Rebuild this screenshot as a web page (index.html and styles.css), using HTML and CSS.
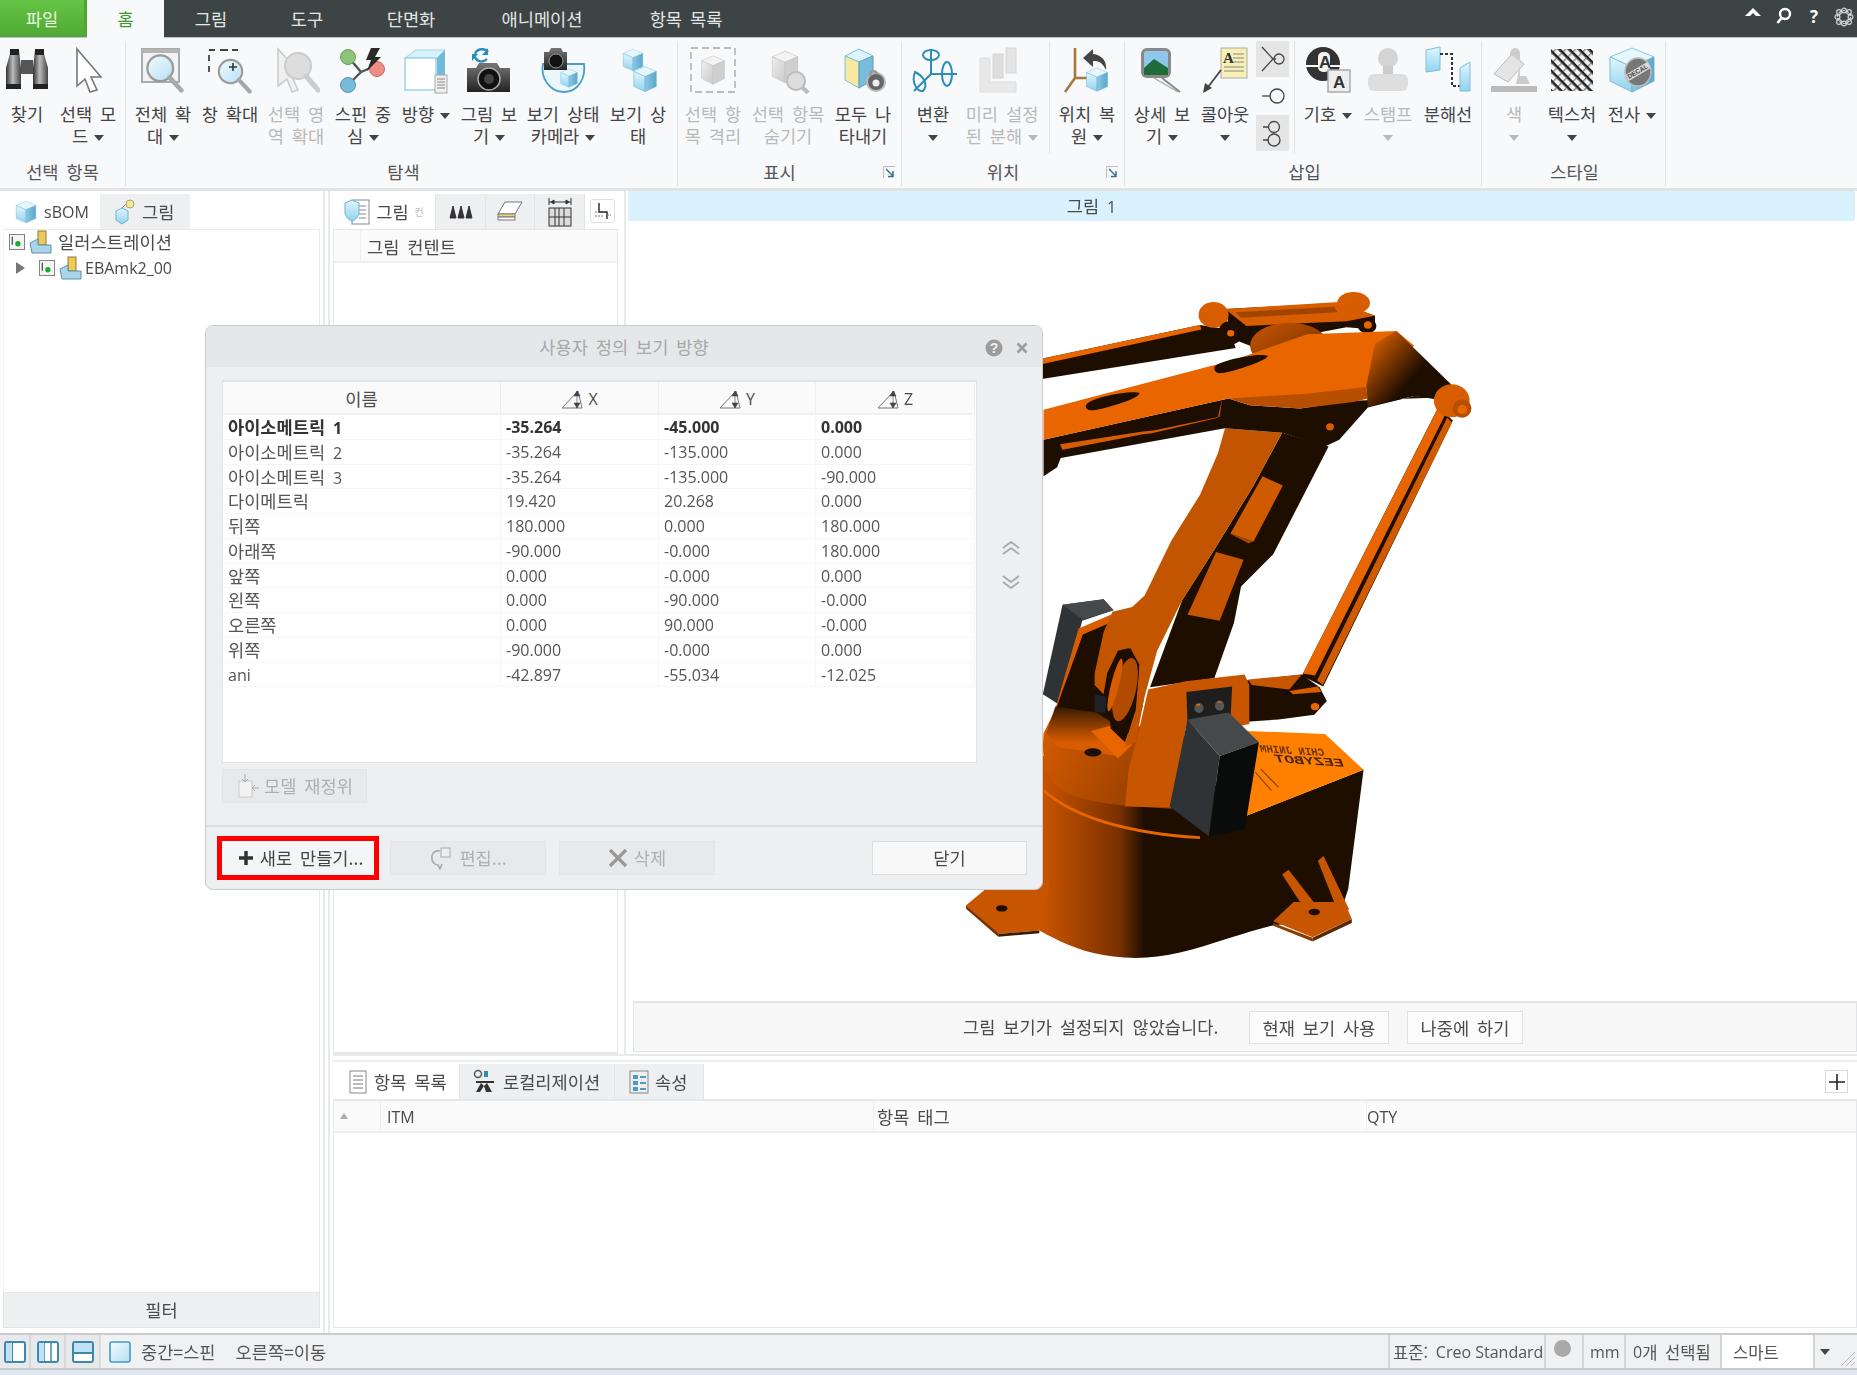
FILE: index.html
```html
<!DOCTYPE html>
<html lang="ko">
<head>
<meta charset="utf-8">
<title>Creo Illustrate</title>
<link rel="stylesheet" href="styles.css">
</head>
<body>
<svg class="sprite" width="0" height="0">
  <defs>
    <linearGradient id="gGray" x1="0" x2="1" y1="0" y2="0"><stop offset="0" stop-color="#333"/><stop offset=".45" stop-color="#bbb"/><stop offset="1" stop-color="#444"/></linearGradient>
    <linearGradient id="gBlue" x1="0" x2="0" y1="0" y2="1"><stop offset="0" stop-color="#e2f6fd"/><stop offset="1" stop-color="#8fd3ee"/></linearGradient>
    <linearGradient id="gSide" x1="0" x2="1" y1="0" y2="0"><stop offset="0" stop-color="#8cc9e4"/><stop offset="1" stop-color="#5aa6cc"/></linearGradient>
    <linearGradient id="gLens" x1="0" x2="1" y1="0" y2="1"><stop offset="0" stop-color="#f2fbff"/><stop offset="1" stop-color="#b5e0f4"/></linearGradient>
    <linearGradient id="gCam" x1="0" x2="0" y1="0" y2="1"><stop offset="0" stop-color="#777"/><stop offset="1" stop-color="#222"/></linearGradient>
    <linearGradient id="gPale" x1="0" x2="1" y1="0" y2="1"><stop offset="0" stop-color="#eee"/><stop offset="1" stop-color="#c9c9c9"/></linearGradient>
    <linearGradient id="gBase" gradientUnits="userSpaceOnUse" x1="260" x2="545" y1="0" y2="0"><stop offset="0" stop-color="#c85400"/><stop offset=".75" stop-color="#7a3000"/><stop offset="1" stop-color="#1e0e00"/></linearGradient>
    <linearGradient id="gPlate" gradientUnits="userSpaceOnUse" x1="270" x2="600" y1="960" y2="1170"><stop offset="0" stop-color="#d85c00"/><stop offset="1" stop-color="#8a3a00"/></linearGradient>
    <linearGradient id="gShade" gradientUnits="userSpaceOnUse" x1="0" x2="0" y1="940" y2="1030"><stop offset="0" stop-color="#1e0e00"/><stop offset="1" stop-color="#d85c00"/></linearGradient>
    <linearGradient id="gBand" gradientUnits="userSpaceOnUse" x1="1190" x2="1290" y1="130" y2="240"><stop offset="0" stop-color="#e86500"/><stop offset="1" stop-color="#1e0e00"/></linearGradient>
    <linearGradient id="gDome" x1="0" x2="1" y1="0" y2="1"><stop offset="0" stop-color="#c85500"/><stop offset="1" stop-color="#6a2c00"/></linearGradient>
    <symbol id="cube" viewBox="0 0 48 48">
      <path d="M6 12 24 4l18 8-18 8z" fill="#e6f7fd" stroke="#8ccbe6"/>
      <path d="M6 12l18 8v24L6 36z" fill="url(#gBlue)" stroke="#7dbedc"/>
      <path d="M42 12 24 20v24l18-8z" fill="url(#gSide)" stroke="#6fb2d2"/>
    </symbol>
    <symbol id="pcube" viewBox="0 0 48 48">
      <path d="M8 11 24 4l16 7-16 7z" fill="#f3f3f3" stroke="#ccc"/>
      <path d="M8 11l16 7v26L8 36z" fill="url(#gPale)" stroke="#ccc"/>
      <path d="M40 11 24 18v26l16-8z" fill="#cfcfcf" stroke="#c4c4c4"/>
    </symbol>
    <symbol id="lens" viewBox="0 0 48 48">
      <circle cx="21" cy="21" r="14" fill="url(#gLens)" stroke="#9a9a9a" stroke-width="2.5"/>
      <path d="M31 31 44 45" stroke="#a8a8a8" stroke-width="5" stroke-linecap="round"/>
    </symbol>
    <symbol id="part" viewBox="0 0 24 24">
      <rect x="9" y="1" width="8" height="14" fill="#f0c95a" stroke="#8d7a3a"/>
      <path d="M1 13 9 9v6h13v8H3z" fill="#a9d4ea" stroke="#5d8fa8"/>
    </symbol>
    <symbol id="chk" viewBox="0 0 18 18">
      <rect x=".5" y=".5" width="17" height="17" fill="#f4f4f4" stroke="#777"/>
      <rect x="3" y="3" width="1.5" height="9" fill="#555"/>
      <circle cx="10" cy="11" r="3" fill="#1cab2c"/>
    </symbol>
    <symbol id="ang" viewBox="0 0 24 19">
      <path d="M1 18 17 1 21 18z" fill="none" stroke="#777"/>
      <path d="M16 1V18M16 1l-3 5h6zM16 18l-3-5h6z" fill="#444" stroke="#444" stroke-width=".6"/>
    </symbol>
  </defs>
</svg>

<div class="app">
  <header class="topbar">
    <div class="tab-file">파일</div>
    <div class="tab-home">홈</div>
    <div class="tab w94">그림</div>
    <div class="tab w98">도구</div>
    <div class="tab w110">단면화</div>
    <div class="tab w152">애니메이션</div>
    <div class="tab w136">항목 목록</div>
    <div class="top-icons">
      <svg class="ti" width="18" height="12" viewBox="0 0 18 12"><path d="M9 1 17 9H12L9 6 6 9H1z" fill="#fff"/></svg>
      <svg class="ti" width="16" height="18" viewBox="0 0 16 18"><circle cx="9" cy="7" r="5" fill="none" stroke="#fff" stroke-width="2.4"/><path d="M5.5 11 1.5 16" stroke="#fff" stroke-width="2.6"/></svg>
      <span class="ti-q num">?</span>
      <svg class="ti" width="20" height="20" viewBox="0 0 20 20"><g fill="none" stroke="#cfd3d4" stroke-width="1.2"><circle cx="10" cy="10" r="6.5" stroke-dasharray="3 1"/><circle cx="10" cy="3.5" r="2.4"/><circle cx="10" cy="16.5" r="2.4"/><circle cx="3.5" cy="10" r="2.4"/><circle cx="16.5" cy="10" r="2.4"/><circle cx="5" cy="5" r="2.4"/><circle cx="15" cy="5" r="2.4"/><circle cx="5" cy="15" r="2.4"/><circle cx="15" cy="15" r="2.4"/></g></svg>
    </div>
  </header>

  <section class="ribbon">
    <div class="grp g1">
      <div class="btns">
        <div class="btn w54"><svg class="ic" viewBox="0 0 48 48"><path d="M3 22 8 4h8l2 18v20H3z" fill="url(#gGray)"/><path d="M45 22 40 4h-8l-2 18v20h15z" fill="url(#gGray)"/><rect x="18" y="14" width="12" height="14" fill="#555"/><rect x="3" y="38" width="15" height="5" fill="#222"/><rect x="30" y="38" width="15" height="5" fill="#222"/><rect x="7" y="3" width="9" height="6" fill="#222"/><rect x="32" y="3" width="9" height="6" fill="#222"/></svg><span>찾기</span></div>
        <div class="btn w68"><svg class="ic" viewBox="0 0 48 48"><path d="M13 3 37 31 27 31 33 44 26 46 21 33 13 40z" fill="#fff" stroke="#777" stroke-width="1.6"/></svg><span>선택 모<br>드<i class="caret"></i></span></div>
      </div>
      <div class="glabel">선택 항목</div>
    </div>
    <div class="grp g2">
      <div class="btns">
        <div class="btn w66"><svg class="ic" viewBox="0 0 48 48"><rect x="3" y="3" width="37" height="33" fill="#f2f2f2" stroke="#aaa" stroke-width="2"/><rect x="3" y="3" width="37" height="4" fill="#b5b5b5"/><use href="#lens" x="1" y="3" width="46" height="44"/></svg><span>전체 확<br>대<i class="caret"></i></span></div>
        <div class="btn w68"><svg class="ic" viewBox="0 0 48 48"><path d="M3 4h6M14 4h8M26 4h6M3 9v6M3 20v6" stroke="#444" stroke-width="1.8" fill="none"/><use href="#lens" x="6" y="8" width="42" height="40"/><path d="M23 21h8M27 17v8" stroke="#333" stroke-width="1.6"/></svg><span>창 확대</span></div>
        <div class="btn w64 off"><svg class="ic" viewBox="0 0 48 48"><path d="M6 3 30 30 20 31 26 44 20 46 15 33 6 40z" fill="#f0f0f0" stroke="#ccc" stroke-width="1.6"/><circle cx="26" cy="20" r="13" fill="#ddd" stroke="#ccc" stroke-width="2"/><path d="M34 30 46 44" stroke="#ccc" stroke-width="5" stroke-linecap="round"/></svg><span>선택 영<br>역 확대</span></div>
        <div class="btn w70"><svg class="ic" viewBox="0 0 48 48"><path d="M10 12 22 26 10 38M22 26 36 20" stroke="#555" stroke-width="2.4" fill="none"/><circle cx="9" cy="11" r="7.5" fill="#8cc47a" stroke="#6a9e5c"/><circle cx="9" cy="39" r="7.5" fill="#78bcd9" stroke="#4f95b5"/><circle cx="38" cy="23" r="7.5" fill="#ef8d84" stroke="#c96a62"/><path d="M32 2h9l-5 9h6L28 25l4-11h-5z" fill="#2a2a2a"/></svg><span>스핀 중<br>심<i class="caret"></i></span></div>
        <div class="btn w56"><svg class="ic" viewBox="0 0 48 48"><path d="M3 12 14 4h29l-8 8z" fill="#d7f2fb" stroke="#9bd5ec"/><rect x="3" y="12" width="31" height="32" fill="#fff" stroke="#9bd5ec" stroke-width="1.5"/><path d="M35 12 43 4v36l-8 4z" fill="#73b9d9"/><rect x="33" y="29" width="12" height="18" fill="#eee" stroke="#aaa"/><path d="M35 33h8M35 36h8M35 39h8M35 42h8" stroke="#888"/></svg><span>방향<i class="caret"></i></span></div>
        <div class="btn w70"><svg class="ic" viewBox="0 0 48 48"><path d="M2 22h9l3-5h18l3 5h10v24H2z" fill="url(#gCam)"/><circle cx="24" cy="33" r="11" fill="#111" stroke="#aaa" stroke-width="1.5"/><circle cx="24" cy="33" r="5" fill="#444"/><path d="M10 8C12 2 20 2 23 6M22 13C18 17 12 16 10 11" stroke="#2b8db8" stroke-width="2.4" fill="none"/><path d="M23 2v7h-6zM7 15v-7h6z" fill="#2b8db8"/></svg><span>그림 보<br>기<i class="caret"></i></span></div>
        <div class="btn w78"><svg class="ic ic58" viewBox="0 0 58 48"><path d="M9 18H50C52 32 44 46 30 46 16 46 6 32 9 18Z" fill="#eaf7fd" stroke="#4a9cc6" stroke-width="1.8"/><use href="#cube" x="24" y="20" width="22" height="24"/><path d="M10 6h5l2-4h10l2 4h4v18H10z" fill="url(#gCam)"/><circle cx="22" cy="15" r="7" fill="#111" stroke="#999"/></svg><span>보기 상태<br>카메라<i class="caret"></i></span></div>
        <div class="btn w72"><svg class="ic" viewBox="0 0 48 48"><use href="#cube" x="6" y="1" width="26" height="26"/><use href="#cube" x="16" y="18" width="30" height="30"/></svg><span>보기 상<br>태</span></div>
      </div>
      <div class="glabel">탐색</div>
    </div>
    <div class="grp g3">
      <div class="btns">
        <div class="btn w66 off"><svg class="ic" viewBox="0 0 48 48"><rect x="2" y="2" width="44" height="44" fill="none" stroke="#bbb" stroke-width="1.8" stroke-dasharray="7 4"/><use href="#pcube" x="7" y="4" width="34" height="40"/></svg><span>선택 항<br>목 격리</span></div>
        <div class="btn w84 off"><svg class="ic" viewBox="0 0 48 48"><use href="#pcube" x="2" y="0" width="38" height="42"/><circle cx="32" cy="35" r="9" fill="#ddd" stroke="#bbb" stroke-width="2"/><path d="M38 41 44 47" stroke="#bbb" stroke-width="4"/></svg><span>선택 항목<br>숨기기</span></div>
        <div class="btn w66"><svg class="ic" viewBox="0 0 48 48"><path d="M6 10 20 3l14 7-14 6z" fill="#dff4fc" stroke="#7dbedc"/><path d="M6 10 20 16v26L6 34z" fill="#f7e9a0" stroke="#7dbedc"/><path d="M34 10 20 16v26l14-8z" fill="#79bcdc" stroke="#5f9fbf"/><circle cx="37" cy="36" r="9" fill="#666" stroke="#bbb" stroke-width="2"/><circle cx="37" cy="37" r="3.5" fill="#eee"/><path d="M31 30C31 24 37 24 38 28" stroke="#999" stroke-width="2.6" fill="none"/></svg><span>모두 나<br>타내기</span></div>
      </div>
      <div class="glabel lb">표시</div>
      <svg class="launch" width="13" height="13" viewBox="0 0 13 13"><path d="M.5 12V.5H12" fill="none" stroke="#bbb"/><path d="M3 3l7 7M10 5v5.500H5" stroke="#2c6f8f" stroke-width="1.400" fill="none"/></svg>
    </div>
    <div class="grp g4">
      <div class="btns">
        <div class="btn w58"><svg class="ic" viewBox="0 0 48 48"><g fill="none" stroke="#2e8cb8" stroke-width="2"><path d="M22 3V28M22 28 5 45M22 28H48"/><ellipse cx="22" cy="9" rx="8" ry="5"/><ellipse cx="38" cy="28" rx="5" ry="12"/><path d="M6 26C14 30 20 38 14 45 8 46 2 36 6 26Z"/></g></svg><span>변환<br><i class="caret solo"></i></span></div>
        <div class="btn w80 off"><svg class="ic" viewBox="0 0 48 48"><path d="M2 12h10v24h26v10H2z" fill="#e8e8e8" stroke="#ddd"/><rect x="15" y="8" width="10" height="24" fill="#dedede" stroke="#d4d4d4"/><rect x="28" y="2" width="10" height="25" fill="#e4e4e4" stroke="#d8d8d8"/></svg><span>미리 설정<br>된 분해<i class="caret"></i></span></div>
        <div class="vsep"></div>
        <div class="btn w68"><svg class="ic" viewBox="0 0 48 48"><path d="M12 2V32M12 32 2 46M12 32H26" stroke="#a5793a" stroke-width="2.6" fill="none"/><path d="M20 12 30 3v5C39 9 44 15 43 24 39 16 36 15 30 15v6z" fill="#444"/><use href="#cube" x="20" y="19" width="28" height="29"/></svg><span>위치 복<br>원<i class="caret"></i></span></div>
      </div>
      <div class="glabel lb">위치</div>
      <svg class="launch" width="13" height="13" viewBox="0 0 13 13"><path d="M.5 12V.5H12" fill="none" stroke="#bbb"/><path d="M3 3l7 7M10 5v5.500H5" stroke="#2c6f8f" stroke-width="1.400" fill="none"/></svg>
    </div>
    <div class="grp g5">
      <div class="btns">
        <div class="btn w68"><svg class="ic" viewBox="0 0 48 48"><rect x="3" y="2" width="30" height="30" rx="6" fill="#888"/><rect x="6" y="5" width="24" height="24" rx="3" fill="#8fc6ea"/><path d="M6 22 16 13 30 22V29H6z" fill="#1f6b3a"/><path d="M24 32 42 46" stroke="#888" stroke-width="2"/><path d="M16 32 40 46" stroke="#aaa" stroke-width="1.400"/></svg><span>상세 보<br>기<i class="caret"></i></span></div>
        <div class="btn w58"><svg class="ic" viewBox="0 0 48 48"><rect x="20" y="2" width="26" height="30" fill="#f7efb4" stroke="#aaa"/><text x="22" y="17" class="ic-a">A</text><path d="M32 8h11M32 12h11M32 16h11M23 21h20M23 25h20" stroke="#888"/><path d="M20 24 4 45" stroke="#444" stroke-width="1.800"/><path d="M2 47 4 37 11 42z" fill="#444"/></svg><span>콜아웃<br><i class="caret solo"></i></span></div>
        <div class="smalls">
          <div class="sbtn on"><svg width="24" height="28" viewBox="0 0 24 28"><path d="M1 2 12 14 1 26M12 14H15" fill="none" stroke="#444" stroke-width="1.300"/><circle cx="18" cy="14" r="5" fill="none" stroke="#444" stroke-width="1.300"/></svg></div>
          <div class="sbtn"><svg width="24" height="22" viewBox="0 0 24 22"><path d="M1 11H10" stroke="#444" stroke-width="1.300"/><circle cx="16" cy="11" r="7" fill="none" stroke="#444" stroke-width="1.300"/></svg></div>
          <div class="sbtn on"><svg width="24" height="30" viewBox="0 0 24 30"><path d="M2 9H8M2 22H8" stroke="#444" stroke-width="1.300"/><circle cx="13" cy="9" r="5.500" fill="none" stroke="#444" stroke-width="1.300"/><circle cx="13" cy="22" r="6" fill="none" stroke="#444" stroke-width="1.300"/></svg></div>
        </div>
        <div class="vsep sm"></div>
        <div class="btn w62"><svg class="ic" viewBox="0 0 48 48"><circle cx="19" cy="18" r="17" fill="#333"/><path d="M2 20H36" stroke="#f8f9fb" stroke-width="2"/><rect x="14" y="6" width="12" height="20" rx="5" fill="#f2f2f2"/><text x="15" y="22" class="ic-b">A</text><rect x="24" y="24" width="22" height="22" fill="#eee" stroke="#aaa" stroke-width="1.500"/><text x="29" y="42" class="ic-c">A</text></svg><span>기호<i class="caret"></i><br>&nbsp;</span></div>
        <div class="btn w58 off"><svg class="ic" viewBox="0 0 48 48"><circle cx="24" cy="12" r="10" fill="#d4d4d4"/><rect x="19" y="20" width="10" height="10" fill="#ccc"/><rect x="4" y="28" width="40" height="17" rx="6" fill="#dedede"/></svg><span>스탬프<br><i class="caret solo"></i></span></div>
        <div class="btn w62"><svg class="ic" viewBox="0 0 48 48"><path d="M2 4 16 1V24L2 26z" fill="url(#gBlue)" stroke="#7dbedc"/><path d="M16 8H28V40H38" fill="none" stroke="#333" stroke-width="2" stroke-dasharray="3 2"/><path d="M36 22 46 16V45H36z" fill="url(#gBlue)" stroke="#7dbedc"/></svg><span>분해선</span></div>
      </div>
      <div class="glabel">삽입</div>
    </div>
    <div class="grp g6">
      <div class="btns">
        <div class="btn w60 off"><svg class="ic" viewBox="0 0 48 48"><path d="M4 28 22 8 34 18 18 36z" fill="#e4e4e4" stroke="#bbb"/><path d="M20 9C20 0 30 0 30 8V30H36L40 38H26C28 28 30 20 31 14z" fill="#ccc"/><rect x="1" y="40" width="46" height="6" fill="#bbb"/></svg><span>색<br><i class="caret solo"></i></span></div>
        <div class="btn w56"><svg class="ic" viewBox="0 0 48 48"><defs><pattern id="hatch" width="7" height="7" patternUnits="userSpaceOnUse" patternTransform="rotate(45)"><rect width="7" height="7" fill="#f2f2f2"/><rect width="7" height="2.600" fill="#222"/><rect y="2.600" width="1.400" height="4.400" fill="#888"/></pattern></defs><rect x="3" y="3" width="42" height="42" fill="url(#hatch)"/></svg><span>텍스처<br><i class="caret solo"></i></span></div>
        <div class="btn w64"><svg class="ic" viewBox="0 0 48 48"><path d="M2 11 24 2l22 9-22 10z" fill="#e6f7fd" stroke="#8ccbe6"/><path d="M2 11l22 10v25L2 35z" fill="url(#gBlue)" stroke="#7dbedc"/><path d="M46 11 24 21v25l22-11z" fill="url(#gSide)" stroke="#6fb2d2"/><ellipse cx="30" cy="26" rx="13" ry="14" fill="#777" stroke="#bbb" stroke-width="1.500"/><path d="M19 32 41 19" stroke="#d8d8d8" stroke-width="7"/><text class="decal" transform="translate(21 33) rotate(-30)">DECAL</text></svg><span>전사<i class="caret"></i><br>&nbsp;</span></div>
      </div>
      <div class="glabel">스타일</div>
    </div>
  </section>

  <main class="main">
    <aside class="left">
      <div class="tabs">
        <div class="ltab lt1 active"><svg width="26" height="28" viewBox="0 0 48 48"><use href="#cube" width="48" height="48"/></svg><span class="num">sBOM</span></div>
        <div class="ltab lt2"><svg width="24" height="26" viewBox="0 0 24 26"><path d="M3 12l6-3 6 3v9l-6 4-6-4z" fill="url(#gBlue)" stroke="#6fb2d2"/><path d="M9 9l5-5" stroke="#888"/><circle cx="17" cy="5" r="4" fill="#f3e6a3" stroke="#b5a657"/></svg><span>그림</span></div>
      </div>
      <div class="tree">
        <div class="row r1"><svg width="16" height="16"><use href="#chk" width="16" height="16"/></svg><svg width="24" height="24"><use href="#part" width="24" height="24"/></svg><span>일러스트레이션</span></div>
        <div class="row r2"><i class="tw"></i><svg width="16" height="16"><use href="#chk" width="16" height="16"/></svg><svg width="24" height="24"><use href="#part" width="24" height="24"/></svg><span class="num">EBAmk2_00</span></div>
      </div>
      <div class="filter">필터</div>
    </aside>
    <div class="vsplit"></div>
    <div class="work">
      <div class="upper">
        <div class="center">
          <div class="tabs ctabs">
            <div class="ctab c1 active"><svg width="26" height="28" viewBox="0 0 26 28"><rect x="8" y="2" width="17" height="24" fill="#fff" stroke="#888"/><path d="M15 8h7M15 12h7M15 16h7M15 20h7" stroke="#888"/><path d="M1 5l7-3 7 3v9c0 5-4 8-7 9-3-1-7-4-7-9z" fill="url(#gBlue)" stroke="#6fb2d2"/></svg><span>그림</span><em class="fade">컨</em></div>
            <div class="ctab c2"><svg width="24" height="16" viewBox="0 0 24 16"><path d="M1 14 4 2l3 12zM9 14l3-12 3 12zM17 14l3-12 3 12z" fill="#333" stroke="#333"/></svg></div>
            <div class="ctab c3"><svg width="26" height="26" viewBox="0 0 26 26"><path d="M8 3H25L18 15H1z" fill="#fff" stroke="#777"/><path d="M1 15H18v3H1z" fill="#f0d67a" stroke="#777"/><path d="M1 18H18v3H1z" fill="#fff" stroke="#777"/></svg></div>
            <div class="ctab c4"><svg width="24" height="30" viewBox="0 0 24 30"><path d="M1 1V8M23 1V8M1 5H23M3 5l3-2v4zM21 5l-3-2v4z" stroke="#333" fill="#333"/><rect x="1" y="11" width="22" height="18" fill="#ddd" stroke="#333"/><path d="M1 20H23M7 11V29M11 11V29M16 11V29" stroke="#333"/></svg></div>
            <div class="ctool"><svg width="18" height="18" viewBox="0 0 18 18"><path d="M5 1V10H13V17" fill="none" stroke="#222" stroke-width="1.400"/><path d="M1 10H5M13 13H17M1 14H9" stroke="#777" stroke-dasharray="2 1"/></svg></div>
          </div>
          <div class="cbody">
            <div class="chead"><div class="chead-a"></div><div class="chead-b">그림 컨텐트</div></div>
          </div>
        </div>
        <div class="vsplit2"></div>
        <div class="view">
          <div class="vtitle">그림 <span class="num">1</span></div>
          <div class="canvas">
            <svg class="robot" width="560" height="720" viewBox="0 0 1568 1570" preserveAspectRatio="none">
              <!-- rear bar and link -->
              <path d="M240 196 700 120 780 130 800 170 240 240z" fill="#1e0e00"/>
              <path d="M240 196 700 120 704 130 240 208z" fill="#e86500"/>
              <path d="M770 85 1090 72 1190 100 1190 130 1110 125 840 165 790 150z" fill="#1e0e00"/>
              <path d="M770 85 1090 70 1190 100 1110 112 830 122z" fill="#d85c00"/>
              <path d="M800 92 1075 80 1085 92 815 104z" fill="#a04500"/>
              <ellipse cx="738" cy="98" rx="42" ry="28" fill="#d85c00"/>
              <ellipse cx="1130" cy="72" rx="46" ry="24" fill="#d85c00"/>
              <ellipse cx="785" cy="137" rx="34" ry="26" fill="#1e0e00"/>
              <ellipse cx="786" cy="138" rx="10" ry="7" fill="#e86500"/>
              <ellipse cx="1168" cy="122" rx="26" ry="16" fill="#1e0e00"/>
              <ellipse cx="1170" cy="120" rx="11" ry="8" fill="#e86500"/>
              <ellipse cx="950" cy="165" rx="110" ry="50" fill="url(#gDome)"/>
              <!-- base -->
              <path d="M240 1060 660 1060 830 1190 1158 1090 1115 1350 1090 1410 900 1430C750 1460 650 1500 520 1500 400 1500 320 1470 250 1440Z" fill="url(#gBase)"/>
              <path d="M45 1385 100 1350 280 1335 250 1440 135 1448z" fill="#c85500"/>
              <path d="M45 1385 135 1446 135 1454 45 1393z" fill="#7a3000"/>
              <path d="M135 1448 250 1440 250 1446 135 1454z" fill="#3a1a00"/>
              <ellipse cx="145" cy="1392" rx="16" ry="7" fill="#1e0e00"/>
              <path d="M905 1420 962 1378 1105 1378 1125 1415 1015 1455z" fill="#c85500"/>
              <path d="M905 1424 1015 1456 1015 1464 905 1430z" fill="#8a3c00"/>
              <path d="M1015 1456 1125 1415 1125 1424 1015 1464z" fill="#5a2800"/>
              <path d="M930 1318 948 1308 1040 1400 1000 1402z" fill="#c85500"/>
              <path d="M1030 1288 1046 1278 1118 1395 1084 1395z" fill="#c85500"/>
              <ellipse cx="1020" cy="1400" rx="16" ry="7" fill="#1e0e00"/>
              <path d="M830 1005 1050 1012 1158 1090 830 1190z" fill="#ff8000"/>
              <text class="mirror" transform="matrix(-1 -.05 .25 .8 1050 1060)">CHIN JNIHM</text>
              <text class="mirror m2" transform="matrix(-1 -.05 .25 .55 1105 1083)">EEZYBOT</text>
              <path d="M855 1095 900 1135M870 1088 920 1128" stroke="#8a4400" stroke-width="3"/>
              <path d="M262 1135C350 1195 500 1228 700 1238" fill="none" stroke="#e86500" stroke-width="6"/>
              <path d="M262 1010C255 1080 270 1120 340 1145 430 1170 530 1170 620 1175L660 1020 300 950z" fill="url(#gPlate)"/>
              <!-- left servo -->
              <path d="M315 730 430 718 458 742 370 765 310 950 260 925z" fill="#2f3336"/>
              <path d="M315 730 430 718 458 742 372 762z" fill="#45494c"/>
              <path d="M280 1000 365 785 470 748 560 735 540 950 500 1040 300 960z" fill="#1e0e00"/>
              <path d="M275 1010 360 782 470 745 476 760 372 795 300 950z" fill="#d85c00"/>
              <path d="M295 952 410 965 500 1010 470 1060 300 1040 270 1010z" fill="url(#gShade)"/>
              <ellipse cx="400" cy="1052" rx="24" ry="9" fill="#1e0e00"/>
              <path d="M395 1005 490 985 510 1035 470 1065z" fill="#e86500"/>
              <path d="M405 925 438 930 435 965 405 965z" fill="#1e2226"/>
              <!-- dark side of arm -->
              <path d="M930 355 1060 385 905 620 815 690 795 770 740 890 560 910 650 720 740 610 850 470z" fill="#1e0e00"/>
              <path d="M875 450 932 470 850 592 785 575z" fill="#d05a00"/>
              <path d="M785 575 850 592 835 596z" fill="#a84700"/>
              <path d="M745 615 822 632 755 765 665 752z" fill="#c65400"/>
              <!-- arm -->
              <path d="M770 345 930 355 850 470 740 610 650 720 580 830 545 930 520 1030 490 1040 520 950 530 870 500 825 470 830 440 880 430 925 405 905 405 880 430 790 455 745 510 735 545 710 620 590 700 490 750 400z" fill="#c45500"/>
              <path d="M470 835 505 825 530 860 520 960 490 1030 450 1000 440 930 440 880z" fill="#1e0e00"/>
              <ellipse cx="490" cy="915" rx="30" ry="72" fill="#b04b00" transform="rotate(18 490 915)"/>
              <ellipse cx="462" cy="905" rx="11" ry="60" fill="#d85c00" transform="rotate(18 462 905)"/>
              <!-- beam -->
              <path d="M262 370 780 280 840 295 980 302 1130 285 1365 278 1300 275 1170 300 1090 370 1050 385 930 355 770 345 310 410 300 430 262 450z" fill="#1e0e00"/>
              <path d="M262 305 800 195 1000 140 1250 133 1300 165 1165 255 1120 280 980 300 780 280 262 370z" fill="#e86500"/>
              <path d="M1250 133 1420 262 1360 282 1300 275 1170 298 1165 255 1190 160z" fill="url(#gBand)"/>
              <path d="M1165 255 1170 280 1130 288 980 302 840 295 780 280 1000 270z" fill="#b84e00"/>
              <path d="M380 296C385 280 500 262 530 268 535 280 420 306 395 306 385 306 380 302 380 296Z" fill="#1e0e00"/>
              <path d="M740 212C750 198 860 180 890 187 890 198 780 225 755 225 745 225 740 220 740 212Z" fill="#1e0e00"/>
              <path d="M308 380 540 352 570 350 755 320 762 280 750 322 565 356 540 358 315 392z" fill="#d85c00"/>
              <ellipse cx="1064" cy="342" rx="11" ry="8" fill="#d85c00"/>
              <!-- rod -->
              <path d="M1368 298 1408 328 1045 908 985 885z" fill="#1e0e00"/>
              <path d="M1366 302 1386 316 1022 884 988 880z" fill="#e86500"/>
              <path d="M1392 322 1406 332 1044 905 1028 895z" fill="#d05a00"/>
              <ellipse cx="1405" cy="285" rx="50" ry="36" fill="#d85c00"/>
              <ellipse cx="1434" cy="302" rx="26" ry="20" fill="#b84e00"/>
              <ellipse cx="1434" cy="304" rx="13" ry="10" fill="#e86500"/>
              <!-- lower link -->
              <path d="M830 895 985 882 1035 910 1055 940 1020 970 920 980 830 985z" fill="#1e0e00"/>
              <path d="M835 893 985 882 950 915 845 905z" fill="#c85500"/>
              <path d="M950 918 1030 908 1040 920 960 925z" fill="#d85c00"/>
              <ellipse cx="1022" cy="952" rx="12" ry="8" fill="#e86500"/>
              <!-- front block -->
              <path d="M555 915 660 897 825 882 838 905 838 990 780 1000 660 1000 620 1172 490 1170 500 1090 530 1000z" fill="#c85500"/>
              <path d="M662 920 790 908 785 985 665 985z" fill="#1e1e1e"/>
              <ellipse cx="697" cy="955" rx="13" ry="11" fill="#555"/>
              <ellipse cx="755" cy="950" rx="13" ry="11" fill="#555"/>
              <path d="M690 948h10M750 942h10" stroke="#e86500" stroke-width="3"/>
              <path d="M665 980 780 965 865 1030 755 1060z" fill="#45494c"/>
              <path d="M665 980 755 1060 725 1235 615 1170z" fill="#2f3336"/>
              <path d="M755 1060 865 1030 825 1220 725 1235z" fill="#0a0c0c"/>
            </svg>
          </div>
          <div class="notify">
            <span class="ntext">그림 보기가 설정되지 않았습니다.</span>
            <div class="nbtn n1">현재 보기 사용</div>
            <div class="nbtn n2">나중에 하기</div>
          </div>
        </div>
      </div>
      <div class="hsplit"></div>
      <div class="lower">
        <div class="ltabs">
          <div class="btab b1 active"><svg width="20" height="24" viewBox="0 0 20 24"><rect x="2" y="1" width="16" height="22" fill="#fff" stroke="#888"/><path d="M5 6h10M5 10h10M5 14h10M5 18h10" stroke="#777"/></svg><span>항목 목록</span></div>
          <div class="btab b2"><svg width="24" height="26" viewBox="0 0 24 26"><circle cx="5" cy="5" r="3.500" fill="none" stroke="#555" stroke-width="1.500"/><path d="M11 2h4v6h-4z" fill="#2b8db8"/><path d="M3 12h18v2H3zM8 14l-5 9h4l4-6zM14 14l5 9h-6l-2-6z" fill="#333"/></svg><span>로컬리제이션</span></div>
          <div class="btab b3"><svg width="20" height="24" viewBox="0 0 20 24"><rect x="1" y="1" width="18" height="22" fill="#eee" stroke="#888"/><path d="M4 5h5v4H4zM4 11h5v4H4zM4 17h5v4H4z" fill="#4a9cc6"/><path d="M11 7h6M11 13h6M11 19h6" stroke="#2b7fa8" stroke-width="1.500"/></svg><span>속성</span></div>
          <div class="plus"><svg width="18" height="18" viewBox="0 0 18 18"><path d="M9 1V17M1 9H17" stroke="#222" stroke-width="1.600"/></svg></div>
        </div>
        <div class="bt">
          <div class="bt-head">
            <div class="bc c-sort"><i class="sort"></i></div>
            <div class="bc c-itm num">ITM</div>
            <div class="bc c-tag">항목 태그</div>
            <div class="bc c-qty num">QTY</div>
          </div>
        </div>
      </div>
    </div>
  </main>

  <footer class="status">
    <div class="st-left">
      <div class="sl sl1"><svg class="lay" viewBox="0 0 22 22"><rect x="1" y="1" width="20" height="20" rx="2" fill="#fff" stroke="#3f88ad" stroke-width="2"/><path d="M8 2V20" stroke="#3f88ad" stroke-width="2"/><rect x="2" y="2" width="6" height="18" fill="#bfe3f2"/></svg></div>
      <div class="sl"><svg class="lay" viewBox="0 0 22 22"><rect x="1" y="1" width="20" height="20" rx="2" fill="#fff" stroke="#3f88ad" stroke-width="2"/><path d="M7 2V20M14 2V20" stroke="#3f88ad" stroke-width="1.500"/><rect x="2" y="2" width="5" height="18" fill="#bfe3f2"/></svg></div>
      <div class="sl"><svg class="lay" viewBox="0 0 22 22"><rect x="1" y="1" width="20" height="20" rx="2" fill="#fff" stroke="#3f88ad" stroke-width="2"/><path d="M2 12H20" stroke="#3f88ad" stroke-width="2"/><rect x="2" y="2" width="18" height="9" fill="#bfe3f2"/></svg></div>
      <svg class="lay box" viewBox="0 0 22 22"><rect x="1" y="1" width="20" height="20" rx="2" fill="url(#gLens)" stroke="#4a98bd" stroke-width="1.600"/></svg>
      <span class="st-t1">중간=스핀</span>
      <span class="st-t2">오른쪽=이동</span>
    </div>
    <div class="st-right">
      <div class="sc s-std">표준: <span class="num">Creo Standard</span></div>
      <div class="sc s-dot"><i class="dot"></i></div>
      <div class="sc s-mm num">mm</div>
      <div class="sc s-sel"><span class="num">0</span>개 선택됨</div>
      <div class="sc s-smart">스마트</div>
      <div class="sc s-arrow"><i class="caret dark"></i></div>
      <div class="s-grip"><svg width="20" height="20" viewBox="0 0 20 20"><path d="M4 18 18 4M9 18 18 9M14 18 18 14" stroke="#bbb"/></svg></div>
    </div>
  </footer>
  <div class="edge"></div>

  <div class="dialog">
    <div class="d-title">
      <span class="d-name">사용자 정의 보기 방향</span>
      <svg class="d-help" width="18" height="18" viewBox="0 0 18 18"><circle cx="9" cy="9" r="8.500" fill="#9c9c9c"/><text x="9" y="14" class="help-q">?</text></svg>
      <svg class="d-x" width="12" height="12" viewBox="0 0 12 12"><path d="M1.500 1.500 10.500 10.500M10.500 1.500 1.500 10.500" stroke="#9c9c9c" stroke-width="2.600"/></svg>
    </div>
    <div class="d-body">
      <div class="dt">
        <div class="dt-head">
          <div class="dh">이름</div>
          <div class="dh"><svg width="24" height="19"><use href="#ang" width="24" height="19"/></svg><span class="num">X</span></div>
          <div class="dh"><svg width="24" height="19"><use href="#ang" width="24" height="19"/></svg><span class="num">Y</span></div>
          <div class="dh"><svg width="24" height="19"><use href="#ang" width="24" height="19"/></svg><span class="num">Z</span></div>
        </div>
        <div class="dr bold"><div>아이소메트릭 <span class="num">1</span></div><div class="num">-35.264</div><div class="num">-45.000</div><div class="num">0.000</div></div>
        <div class="dr"><div>아이소메트릭 <span class="num">2</span></div><div class="num">-35.264</div><div class="num">-135.000</div><div class="num">0.000</div></div>
        <div class="dr"><div>아이소메트릭 <span class="num">3</span></div><div class="num">-35.264</div><div class="num">-135.000</div><div class="num">-90.000</div></div>
        <div class="dr"><div>다이메트릭</div><div class="num">19.420</div><div class="num">20.268</div><div class="num">0.000</div></div>
        <div class="dr"><div>뒤쪽</div><div class="num">180.000</div><div class="num">0.000</div><div class="num">180.000</div></div>
        <div class="dr"><div>아래쪽</div><div class="num">-90.000</div><div class="num">-0.000</div><div class="num">180.000</div></div>
        <div class="dr"><div>앞쪽</div><div class="num">0.000</div><div class="num">-0.000</div><div class="num">0.000</div></div>
        <div class="dr"><div>왼쪽</div><div class="num">0.000</div><div class="num">-90.000</div><div class="num">-0.000</div></div>
        <div class="dr"><div>오른쪽</div><div class="num">0.000</div><div class="num">90.000</div><div class="num">-0.000</div></div>
        <div class="dr"><div>위쪽</div><div class="num">-90.000</div><div class="num">-0.000</div><div class="num">0.000</div></div>
        <div class="dr"><div class="num">ani</div><div class="num">-42.897</div><div class="num">-55.034</div><div class="num">-12.025</div></div>
      </div>
      <div class="d-arrows">
        <svg width="18" height="14" viewBox="0 0 18 14"><path d="M1 7 9 1l8 6M1 13l8-6 8 6" fill="none" stroke="#aaa" stroke-width="1.800"/></svg>
        <svg width="18" height="14" viewBox="0 0 18 14"><path d="M1 1l8 6 8-6M1 7l8 6 8-6" fill="none" stroke="#aaa" stroke-width="1.800"/></svg>
      </div>
    </div>
    <div class="d-model"><svg width="24" height="24" viewBox="0 0 24 24"><rect x="3" y="7" width="13" height="16" fill="#f2f2f2" stroke="#ccc"/><path d="M9 0V8M6 5l3 3 3-3M16 14H23M19 11l-3 3 3 3" stroke="#aaa" fill="none"/></svg><span>모델 재정위</span></div>
    <div class="d-foot">
      <div class="fb new"><svg width="16" height="16" viewBox="0 0 16 16"><path d="M8 1V15M1 8H15" stroke="#333" stroke-width="3.500"/></svg><span>새로 만들기...</span></div>
      <div class="fb dis edit"><svg width="24" height="24" viewBox="0 0 24 24"><path d="M11 5C5 4 2 8 3 13 3 17 7 19 9 19L11 23 13 18" fill="none" stroke="#aaa" stroke-width="1.600"/><rect x="12" y="2" width="9" height="9" fill="#eee" stroke="#aaa"/></svg><span>편집...</span></div>
      <div class="fb dis del"><svg width="20" height="20" viewBox="0 0 20 20"><path d="M2 2 18 18M18 2 2 18" stroke="#999" stroke-width="3.200"/></svg><span>삭제</span></div>
      <div class="fb close">닫기</div>
    </div>
  </div>
</div>
</body>
</html>
```

FILE: styles.css
```css
* { box-sizing: border-box; }
html, body { margin: 0; padding: 0; background: #fff; }
body {
  width: 1857px; height: 1375px; overflow: hidden;
  font-family: "Noto Sans CJK KR", "Noto Sans", sans-serif;
  font-size: 17.6px; line-height: 22px; color: #4a4a4a; word-spacing: 3px;
}
.sprite { position: absolute; }
.num { font-family: "Open Sans", "Noto Sans", sans-serif; font-size: 16px; word-spacing: 0; }
.app { position: relative; width: 1857px; height: 1375px; display: flex; flex-direction: column; filter: blur(.45px); }

/* top bar */
.topbar { height: 38px; flex: none; display: flex; background: #3c4446; border-bottom: 1px solid #bfc2c3; color: #e4e6e6; }
.topbar > div { display: flex; align-items: center; justify-content: center; }
.tab-file { width: 84px; margin-right: 3px; background: linear-gradient(#66c546, #4fa733); color: #eaf6e2; box-shadow: 3px 0 0 #4fa733; }
.tab-home { width: 77px; background: #f8f9fb; color: #3f9a2a; height: 38px; }
.w94 { width: 94px; } .w98 { width: 98px; } .w110 { width: 110px; } .w152 { width: 152px; } .w136 { width: 136px; }
.topbar > .top-icons { margin-left: auto; justify-content: flex-start; gap: 14px; padding-right: 3px; align-items: flex-start; padding-top: 7px; }
.ti-q { color: #fff; font-weight: 700; font-size: 17px; line-height: 20px; margin: 0 2px 0 4px; }

/* ribbon */
.ribbon { height: 153px; flex: none; display: flex; background: #f8f9fb; border-bottom: 3px solid #e2e3e5; }
.grp { position: relative; display: flex; flex-direction: column; border-right: 1px solid #e2e3e5; margin: 3px 0 2px; }
.g1 { width: 126px; } .g2 { width: 552px; padding-left: 4px; } .g3 { width: 224px; padding-left: 2px; }
.g4 { width: 223px; padding-left: 2px; } .g5 { width: 357px; padding-left: 3px; } .g6 { width: 184px; padding-left: 2px; }
.btns { height: 119px; display: flex; }
.glabel { text-align: center; height: 28px; line-height: 27px; color: #555; }
.glabel.lb { padding-right: 22px; }
.btn { display: flex; flex-direction: column; align-items: center; text-align: center; padding-top: 5px; white-space: nowrap; color: #444; flex: none; }
.btn.off { color: #b9b9b9; }
.btn.off .caret { border-top-color: #b9b9b9; }
.ic { width: 48px; height: 48px; display: block; margin-bottom: 9px; }
.ic58 { width: 58px; }
.w54 { width: 54px; } .w56 { width: 56px; } .w58 { width: 58px; } .w60 { width: 60px; } .w62 { width: 62px; }
.w64 { width: 64px; } .w66 { width: 66px; } .w68 { width: 68px; } .w70 { width: 70px; } .w72 { width: 72px; }
.w78 { width: 78px; } .w80 { width: 80px; } .w84 { width: 84px; }
.caret { display: inline-block; width: 0; height: 0; border: 5px solid transparent; border-top: 6px solid #444; border-bottom: 0; margin-left: 6px; vertical-align: middle; }
.caret.solo { margin-left: 0; }
.caret.dark { margin: 0; }
.vsep { width: 1px; height: 112px; background: #e2e3e5; margin: 0 3px 0 7px; flex: none; }
.vsep.sm { margin: 0 2px 0 5px; }
.smalls { width: 33px; flex: none; margin-left: 2px; display: flex; flex-direction: column; }
.sbtn { height: 36px; display: flex; align-items: center; justify-content: center; }
.sbtn:nth-child(2) { height: 38px; }
.sbtn.on { background: #e5e5e6; }
.launch { position: absolute; right: 5px; bottom: 7px; }
.ic-a { font: 700 15px "Liberation Serif", serif; fill: #333; }
.ic-b { font: 700 17px "Liberation Sans", sans-serif; fill: #333; }
.ic-c { font: 700 17px "Liberation Sans", sans-serif; fill: #333; }
.decal { font: 700 6.500px "Liberation Sans", sans-serif; fill: #444; word-spacing: 0; }
.mirror { font: 700 30px "Liberation Mono", monospace; fill: #6b3400; word-spacing: 0; }
.m2 { font-size: 46px; fill: #4d2600; }

/* main */
.main { height: 1142px; flex: none; display: flex; }
.left { width: 320px; flex: none; padding-left: 3px; display: flex; flex-direction: column; padding-bottom: 5px; }
.tabs { height: 36px; margin-top: 2px; padding-top: 1px; flex: none; display: flex; align-items: stretch; }
.ltab { display: flex; align-items: center; gap: 5px; background: #eeeff0; color: #4a4a4a; }
.ltab.active, .ctab.active, .btab.active { background: #fff; }
.lt1 { width: 97px; padding-left: 10px; }
.lt2 { width: 90px; padding-left: 13px; }
.tree { flex: 1; border: 1px solid #e8e9ea; border-left-color: #f2f2f2; padding: 0 0 0 2px; }
.row { display: flex; align-items: center; height: 26px; gap: 4px; }
.r1 { margin-top: -1px; padding-left: 3px; }
.r1 span { margin-left: 1px; letter-spacing: .1px; }
.r2 { padding-left: 10px; margin-top: 0; }
.r2 span { margin-left: -2px; }
.tw { width: 0; height: 0; border: 6px solid transparent; border-left: 9px solid #777; border-right: 0; margin-right: 10px; }
.filter { height: 35px; flex: none; background: #eeeff0; border: 1px solid #e2e3e5; border-top: 0; text-align: center; line-height: 34px; }
.vsplit { width: 13px; flex: none; background: linear-gradient(90deg, #fff 0 3px, #e6eaed 3px 5px, #fff 5px 8px, #e6eaed 8px 10px, #fff 10px); }
.work { flex: 1; display: flex; flex-direction: column; min-width: 0; }
.upper { height: 863px; flex: none; display: flex; }
.center { width: 285px; flex: none; display: flex; flex-direction: column; }
.ctabs { position: relative; }
.ctab { display: flex; align-items: center; justify-content: center; background: #eeeff0; border-right: 1px solid #e2e3e5; }
.c1 { width: 103px; gap: 6px; }
.fade { font-style: normal; color: #bbb; font-size: 10px; line-height: 14px; }
.c2 { width: 50px; } .c3 { width: 49px; } .c4 { width: 50px; }
.ctool { position: absolute; left: 257px; top: 6px; width: 25px; height: 24px; border: 1px solid #e0e0e0; border-radius: 3px; display: flex; align-items: center; justify-content: center; background: #fff; }
.cbody { flex: 1; border: 1px solid #e6e7e8; border-bottom-width: 2px; }
.chead { height: 33px; display: flex; background: #fafafa; border-bottom: 2px solid #eeeff0; }
.chead-a { width: 27px; border-right: 1px solid #eee; }
.chead-b { padding-left: 6px; line-height: 33px; }
.vsplit2 { width: 10px; flex: none; background: linear-gradient(90deg, #fff 0 6px, #e6eaed 6px 8px, #fff 8px); }
.view { flex: 1; display: flex; flex-direction: column; min-width: 0; }
.vtitle { height: 30px; flex: none; background: #d9f2fe; text-align: center; line-height: 30px; margin-right: 2px; padding-right: 300px; }
.canvas { flex: 1; position: relative; background: #fff; }
.robot { position: absolute; left: 322px; top: 49px; }
.notify { height: 51px; flex: none; margin: 0 0 2px 5px; background: #f7f7f7; border: 1px solid #e2e3e5; border-top-width: 2px; display: flex; align-items: center; padding-left: 329px; }
.nbtn { height: 33px; border: 1px solid #dfe0e2; background: #fbfbfb; line-height: 31px; text-align: center; }
.ntext { width: 286px; }
.n1 { width: 140px; } .n2 { width: 116px; margin-left: 18px; }
.hsplit { height: 8px; flex: none; background: linear-gradient(#e6eaed 0 2px, #fff 2px 6px, #eef0f2 6px); }
.lower { flex: 1; padding-bottom: 5px; display: flex; flex-direction: column; }
.ltabs { height: 36px; flex: none; display: flex; margin-top: 2px; position: relative; border-bottom: 1px solid #e8e9ea; }
.btab { display: flex; align-items: center; gap: 6px; background: #eeeff0; border-right: 1px solid #e2e3e5; }
.b1 { width: 127px; padding-left: 15px; } .b2 { width: 155px; padding-left: 13px; } .b3 { width: 89px; padding-left: 14px; }
.plus { position: absolute; right: 9px; top: 6px; width: 23px; height: 23px; background: #fff; border: 1px solid #d8d8d8; display: flex; align-items: center; justify-content: center; }
.bt { flex: 1; border: 1px solid #e6e7e8; }
.bt-head { height: 32px; display: flex; background: #fafafa; border-bottom: 2px solid #eeeff0; }
.bc { line-height: 32px; border-right: 1px solid #eee; padding-left: 6px; }
.c-sort { width: 47px; padding-left: 6px; display: flex; align-items: center; }
.sort { width: 0; height: 0; border: 4px solid transparent; border-bottom: 6px solid #aaa; border-top: 0; }
.c-itm { width: 493px; } .c-tag { width: 493px; padding-left: 3px; } .c-qty { flex: 1; border-right: 0; padding-left: 0; }

/* status */
.status { height: 37px; flex: none; display: flex; justify-content: space-between; background: #f0f1f2; border-top: 2px solid #c9cbcd; border-bottom: 2px solid #c9cbcd; color: #555; }
.st-left { display: flex; align-items: center; }
.sl { height: 33px; width: 35px; background: #e8e9ea; border-right: 2px solid #d8d9da; display: flex; align-items: center; justify-content: center; }
.sl1 { width: 31px; }
.lay { width: 22px; height: 22px; display: block; }
.box { margin-left: 8px; }
.st-t1 { margin-left: 10px; }
.st-t2 { margin-left: 20px; }
.st-right { display: flex; font-size: 16.6px; }
.sc { border-left: 2px solid #d4d5d6; display: flex; align-items: center; padding: 0 4px; height: 33px; white-space: pre; }
.s-std { width: 156px; padding-left: 3px; }
.s-dot { width: 38px; padding-left: 8px; }
.dot { width: 17px; height: 17px; border-radius: 50%; background: #a9a9a9; margin-top: -6px; }
.s-mm { width: 42px; padding-left: 6px; }
.s-sel { width: 96px; padding-left: 7px; }
.s-smart { width: 93px; padding-left: 11px; background: #fff; }
.s-arrow { width: 22px; justify-content: center; }
.s-grip { width: 22px; display: flex; align-items: flex-end; justify-content: flex-end; }
.edge { height: 5px; flex: none; background: #dfe7f0; }

/* dialog */
.dialog { position: absolute; left: 205px; top: 325px; width: 838px; height: 565px; background: #eeeff1; border: 1px solid #c9cacc; border-radius: 8px; overflow: hidden; color: #4a4a4a; }
.d-title { height: 41px; background: #e6e7e9; display: flex; align-items: center; justify-content: center; position: relative; color: #a8a8a8; padding-top: 1px; }
.d-help { position: absolute; right: 39px; top: 13px; }
.help-q { font: 700 14px "Liberation Sans", sans-serif; fill: #eee; text-anchor: middle; }
.d-x { position: absolute; right: 14px; top: 16px; }
.d-body { display: flex; margin: 13px 0 0 16px; }
.dt { width: 755px; height: 383px; background: #fff; border: 1px solid #e2e3e5; border-top-width: 2px; padding-right: 1px; }
.dt-head { height: 33px; display: grid; grid-template-columns: 278px 158px 157px 159px; background: #fafafa; border-bottom: 2px solid #f0f0f0; }
.dh { display: flex; align-items: center; justify-content: center; gap: 3px; border-right: 1px solid #eee; padding-top: 3px; }
.dr { height: 24.75px; display: grid; grid-template-columns: 278px 158px 157px 159px; border-bottom: 1px solid #f6f6f6; color: #555; }
.dr > div { padding-left: 5px; line-height: 24px; border-right: 1px solid #f5f5f5; white-space: nowrap; }
.dr.bold { font-weight: 700; color: #333; }
.d-arrows { flex: 1; display: flex; flex-direction: column; align-items: center; justify-content: center; gap: 20px; padding-bottom: 14px; padding-left: 2px; }
.d-model { margin: 6px 0 0 16px; width: 145px; height: 34px; display: flex; align-items: center; justify-content: center; gap: 4px; background: #e8e9eb; border: 1px solid #e2e3e5; color: #b0b0b0; }
.d-foot { margin: 22px 0 0; border-top: 2px solid #dcdddf; display: flex; align-items: flex-start; padding-top: 14px; position: relative; }
.fb { height: 34px; display: flex; align-items: center; justify-content: center; gap: 6px; }
.new { margin-left: 16px; width: 152px; padding-left: 5px; background: #f4f5f6; outline: 5px solid #f00; color: #444; }
.dis { background: #e8e9eb; border: 1px solid #e2e3e5; color: #b0b0b0; width: 156px; }
.edit { margin-left: 16px; } .del { margin-left: 13px; }
.close { margin-left: auto; margin-right: 15px; width: 155px; background: #f8f8f8; border: 1px solid #dcdddf; }
```
